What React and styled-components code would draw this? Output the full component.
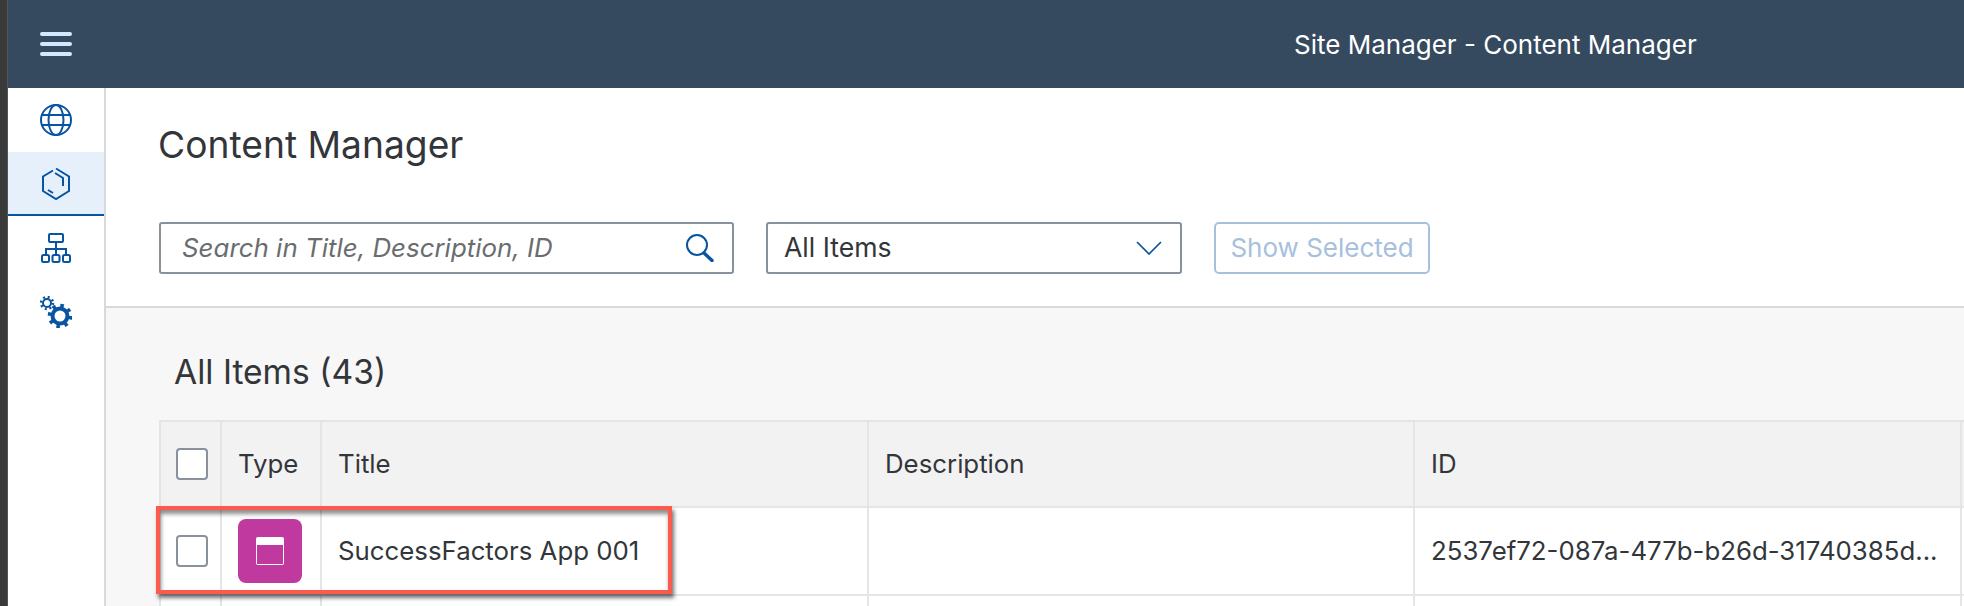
import React from "react";
import styled, { createGlobalStyle } from "styled-components";

const Global = createGlobalStyle`
  html, body { margin: 0; padding: 0; background: #fff; }
  body { font-family: "Inter", "Noto Sans", "Liberation Sans", sans-serif; color: #32363a; }
  * { box-sizing: border-box; }
`;

const Page = styled.div`
  position: relative;
  width: 1964px;
  height: 606px;
  overflow: hidden;
  display: flex;
  background: #fff;
`;
const Strip = styled.div`
  width: 8px;
  flex: none;
  background: #3a3a3a;
  border-right: 1px solid #555;
`;
const Main = styled.div`
  flex: 1;
  min-width: 0;
  display: flex;
  flex-direction: column;
`;
const ShellBar = styled.header`
  height: 88px;
  flex: none;
  background: #354a5f;
  display: flex;
  align-items: center;
  padding-left: 32px;
  position: relative;
`;
const Burger = styled.div`
  width: 32px;
  display: flex;
  flex-direction: column;
  gap: 6px;
`;
const BurgerLine = styled.span`
  display: block;
  height: 4px;
  border-radius: 2px;
  background: #d1e8ff;
`;
const ShellTitle = styled.div`
  margin-left: 1222px;
  font-size: 26px;
  color: #fff;
  white-space: nowrap;
`;
const Body = styled.div`
  flex: 1;
  display: flex;
  min-height: 0;
`;
const Side = styled.nav`
  width: 98px;
  flex: none;
  border-right: 2px solid #d9d9d9;
  background: #fff;
`;
const SideItem = styled.div`
  height: 64px;
  display: flex;
  align-items: center;
  justify-content: center;
  color: #0854a0;
  background: ${(p) => (p.$active ? "#e5f0fa" : "#fff")};
  box-shadow: ${(p) => (p.$active ? "inset 0 -2px 0 #0854a0" : "none")};
`;
const Content = styled.div`
  flex: 1;
  min-width: 0;
  display: flex;
  flex-direction: column;
`;
const Head = styled.div`
  height: 220px;
  flex: none;
  padding: 34px 0 0 52px;
  border-bottom: 2px solid #d9d9d9;
  background: #fff;
`;
const PageTitle = styled.h1`
  margin: 0;
  font-size: 37.2px;
  line-height: 46px;
  font-weight: 400;
  color: #32363a;
`;
const Filters = styled.div`
  display: flex;
  align-items: stretch;
  height: 52px;
  margin-top: 54px;
  margin-left: 1px;
`;
const Search = styled.div`
  width: 575px;
  border: 2px solid #89919a;
  border-radius: 3px;
  display: flex;
  align-items: center;
  justify-content: space-between;
  padding: 0 18px 0 21px;
  color: #0854a0;
`;
const Placeholder = styled.span`
  font-size: 25.9px;
  font-style: italic;
  color: #6a6d70;
  margin-bottom: 2px;
`;
const Select = styled.div`
  width: 416px;
  margin-left: 32px;
  border: 2px solid #89919a;
  border-radius: 3px;
  display: flex;
  align-items: center;
  justify-content: space-between;
  padding: 0 18px 0 16px;
  color: #32363a;
  svg { color: #0854a0; }
`;
const SelectValue = styled.span`
  font-size: 26.6px;
  margin-bottom: 2px;
`;
const GhostButton = styled.div`
  width: 216px;
  margin-left: 32px;
  padding-bottom: 2px;
  border: 2px solid #a6c0de;
  border-radius: 5px;
  display: flex;
  align-items: center;
  justify-content: center;
  font-size: 26px;
  color: #a6c0de;
  white-space: nowrap;
`;
const ListArea = styled.div`
  flex: 1;
  background: #f7f7f7;
  padding-left: 53px;
  min-height: 0;
`;
const ListTitle = styled.h2`
  margin: 0;
  height: 112px;
  padding: 15px 0 0 15px;
  display: flex;
  align-items: center;
  font-size: 33.6px;
  font-weight: 400;
  color: #32363a;
`;
const Table = styled.div`
  display: grid;
  grid-template-columns: 61px 100px 547px 546px 547px 1fr;
  grid-template-rows: 86px 88px 86px;
  border-top: 2px solid #e5e5e5;
  border-left: 2px solid #e5e5e5;
`;
const Cell = styled.div`
  display: flex;
  align-items: center;
  padding-left: ${(p) => p.$pad ?? 16}px;
  background: ${(p) => (p.$head ? "#f2f2f2" : "#fff")};
  border-right: 2px solid #e5e5e5;
  border-bottom: 2px solid #e5e5e5;
  font-size: 25.8px;
  color: #32363a;
  white-space: nowrap;
  overflow: hidden;
`;
const CellText = styled.span`
  margin-bottom: 2px;
`;
const Check = styled.span`
  width: 32px;
  height: 32px;
  border: 2px solid #89919a;
  border-radius: 4px;
  background: #fff;
  display: block;
`;
const TypeBadge = styled.div`
  width: 64px;
  height: 64px;
  border-radius: 8px;
  background: #c0399f;
  display: flex;
  align-items: center;
  justify-content: center;
  color: #fff;
`;
const Highlight = styled.div`
  position: absolute;
  left: 156px;
  top: 506px;
  width: 516px;
  height: 88px;
  border: 4px solid #fb5a4c;
  box-shadow: 2px 4px 4px rgba(0, 0, 0, 0.55), inset 1px 4px 4px rgba(0, 0, 0, 0.45);
  pointer-events: none;
`;

const GlobeIcon = () => (
  <svg width="32" height="32" viewBox="0 0 32 32" fill="none" stroke="currentColor" strokeWidth="2">
    <circle cx="16" cy="16" r="15" />
    <ellipse cx="16" cy="16" rx="7.5" ry="15" />
    <path d="M2 11h28M2 21h28" />
  </svg>
);
const CubeIcon = () => (
  <svg width="32" height="34" viewBox="0 0 32 34" fill="none" stroke="currentColor" strokeWidth="2">
    <path d="M13 3.5 3 9.5V24l13 8 13-8V9.5L16 1.5" />
    <path d="M15 6l8 5v8M8 23l5 3" />
  </svg>
);
const TreeIcon = () => (
  <svg width="30" height="30" viewBox="0 0 30 30" fill="none" stroke="currentColor" strokeWidth="2">
    <rect x="8" y="1" width="14" height="8" rx="1" />
    <path d="M15 9v12M5 21v-5h20v5" />
    <rect x="1" y="22" width="7" height="7" rx="1.5" />
    <rect x="11.5" y="22" width="7" height="7" rx="1.5" />
    <rect x="22" y="22" width="7" height="7" rx="1.5" />
  </svg>
);
const GearIcon = () => (
  <svg width="32" height="32" viewBox="0 0 32 32" fill="none" stroke="currentColor">
    <circle cx="7" cy="7" r="4" strokeWidth="2" />
    <circle cx="7" cy="7" r="6" strokeWidth="2.4" strokeDasharray="2 2.71" />
    <circle cx="20" cy="20" r="7.5" strokeWidth="4" />
    <circle cx="20" cy="20" r="10.5" strokeWidth="3.6" strokeDasharray="3.5 4.75" />
  </svg>
);
const SearchIcon = () => (
  <svg width="29" height="28" viewBox="0 0 29 28" fill="none" stroke="currentColor" strokeLinecap="round">
    <circle cx="12" cy="11" r="10" strokeWidth="2" />
    <path d="M19 19l8 7.5" strokeWidth="3.4" />
  </svg>
);
const ChevronIcon = () => (
  <svg width="26" height="14" viewBox="0 0 26 14" fill="none" stroke="currentColor" strokeWidth="1.7">
    <path d="M1 1l12 12L25 1" />
  </svg>
);
const WindowIcon = () => (
  <svg width="28" height="28" viewBox="0 0 28 28" fill="none">
    <path d="M2 0h24a2 2 0 0 1 2 2v24a2 2 0 0 1-2 2H2a2 2 0 0 1-2-2V2a2 2 0 0 1 2-2Z" fill="#fff" />
    <rect x="1" y="8" width="26" height="19" fill="#c0399f" />
  </svg>
);

export default function App() {
  return (
    <Page>
      <Global />
      <Strip />
      <Main>
        <ShellBar>
          <Burger>
            <BurgerLine />
            <BurgerLine />
            <BurgerLine />
          </Burger>
          <ShellTitle>Site Manager - Content Manager</ShellTitle>
        </ShellBar>
        <Body>
          <Side>
            <SideItem><GlobeIcon /></SideItem>
            <SideItem $active><CubeIcon /></SideItem>
            <SideItem><TreeIcon /></SideItem>
            <SideItem><GearIcon /></SideItem>
          </Side>
          <Content>
            <Head>
              <PageTitle>Content Manager</PageTitle>
              <Filters>
                <Search>
                  <Placeholder>Search in Title, Description, ID</Placeholder>
                  <SearchIcon />
                </Search>
                <Select>
                  <SelectValue>All Items</SelectValue>
                  <ChevronIcon />
                </Select>
                <GhostButton>Show Selected</GhostButton>
              </Filters>
            </Head>
            <ListArea>
              <ListTitle>All Items (43)</ListTitle>
              <Table>
                <Cell $head $pad={15}><Check /></Cell>
                <Cell $head><CellText>Type</CellText></Cell>
                <Cell $head><CellText>Title</CellText></Cell>
                <Cell $head><CellText>Description</CellText></Cell>
                <Cell $head><CellText>ID</CellText></Cell>
                <Cell $head />
                <Cell $pad={15}><Check /></Cell>
                <Cell><TypeBadge><WindowIcon /></TypeBadge></Cell>
                <Cell><CellText>SuccessFactors App 001</CellText></Cell>
                <Cell />
                <Cell><CellText>2537ef72-087a-477b-b26d-31740385d...</CellText></Cell>
                <Cell />
                <Cell />
                <Cell />
                <Cell />
                <Cell />
                <Cell />
                <Cell />
              </Table>
            </ListArea>
          </Content>
        </Body>
      </Main>
      <Highlight />
    </Page>
  );
}
